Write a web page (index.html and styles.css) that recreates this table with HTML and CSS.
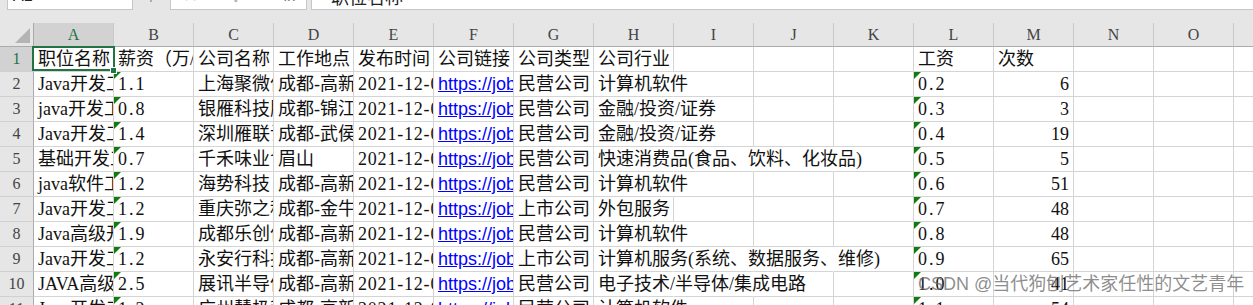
FILE: index.html
```html
<!DOCTYPE html>
<html lang="zh-CN">
<head>
<meta charset="utf-8">
<title>工作表</title>
<link rel="stylesheet" href="styles.css">
</head>
<body>
<div class="app">
  <div class="fbar">
    <div class="namebox">A1</div>
    <div class="sep"><span class="dot"></span></div>
    <div class="fxbox"><span class="ic">✕</span><span class="ic">✓</span><span class="ic fx">fx</span></div>
    <div class="formula">职位名称</div>
  </div>

  <div class="sheet">
    <div class="hrow">
      <div class="corner"><svg width="34" height="23" viewBox="0 0 34 23"><polygon points="30,5 30,20 15,20" fill="#b4b4b4"/></svg></div>
      <div class="ch sel">A</div><div class="ch">B</div><div class="ch">C</div><div class="ch">D</div><div class="ch">E</div><div class="ch">F</div><div class="ch">G</div><div class="ch">H</div><div class="ch">I</div><div class="ch">J</div><div class="ch">K</div><div class="ch">L</div><div class="ch">M</div><div class="ch">N</div><div class="ch">O</div><div class="ch">P</div>
    </div>

    <div class="row">
      <div class="rh sel">1</div>
      <div class="c a1">职位名称<span class="selbox"></span><span class="handle"></span></div>
      <div class="c">薪资（万/月）</div>
      <div class="c">公司名称</div>
      <div class="c">工作地点</div>
      <div class="c">发布时间</div>
      <div class="c">公司链接</div>
      <div class="c">公司类型</div>
      <div class="c">公司行业</div>
      <div class="c"></div><div class="c"></div><div class="c"></div>
      <div class="c">工资</div>
      <div class="c">次数</div>
      <div class="c"></div><div class="c"></div><div class="c"></div>
    </div>

    <div class="row">
      <div class="rh">2</div>
      <div class="c">Java开发工程师</div>
      <div class="c n e">1.1</div>
      <div class="c">上海聚微信息科技</div>
      <div class="c">成都-高新区</div>
      <div class="c d">2021-12-01</div>
      <div class="c"><span class="lnk">https://jobs.51job.com</span></div>
      <div class="c">民营公司</div>
      <div class="c spill nb">计算机软件</div>
      <div class="c"></div><div class="c"></div><div class="c"></div>
      <div class="c n e">0.2</div>
      <div class="c r">6</div>
      <div class="c"></div><div class="c"></div><div class="c"></div>
    </div>

    <div class="row">
      <div class="rh">3</div>
      <div class="c">java开发工程师</div>
      <div class="c n e">0.8</div>
      <div class="c">银雁科技服务</div>
      <div class="c">成都-锦江区</div>
      <div class="c d">2021-12-01</div>
      <div class="c"><span class="lnk">https://jobs.51job.com</span></div>
      <div class="c">民营公司</div>
      <div class="c spill nb">金融/投资/证券</div>
      <div class="c"></div><div class="c"></div><div class="c"></div>
      <div class="c n e">0.3</div>
      <div class="c r">3</div>
      <div class="c"></div><div class="c"></div><div class="c"></div>
    </div>

    <div class="row">
      <div class="rh">4</div>
      <div class="c">Java开发工程师</div>
      <div class="c n e">1.4</div>
      <div class="c">深圳雁联计算</div>
      <div class="c">成都-武侯区</div>
      <div class="c d">2021-12-01</div>
      <div class="c"><span class="lnk">https://jobs.51job.com</span></div>
      <div class="c">民营公司</div>
      <div class="c spill nb">金融/投资/证券</div>
      <div class="c"></div><div class="c"></div><div class="c"></div>
      <div class="c n e">0.4</div>
      <div class="c r">19</div>
      <div class="c"></div><div class="c"></div><div class="c"></div>
    </div>

    <div class="row">
      <div class="rh">5</div>
      <div class="c">基础开发工程师</div>
      <div class="c n e">0.7</div>
      <div class="c">千禾味业食品</div>
      <div class="c">眉山</div>
      <div class="c d">2021-12-01</div>
      <div class="c"><span class="lnk">https://jobs.51job.com</span></div>
      <div class="c">民营公司</div>
      <div class="c spill nb">快速消费品(食品、饮料、化妆品)</div>
      <div class="c nb"></div><div class="c nb"></div><div class="c"></div>
      <div class="c n e">0.5</div>
      <div class="c r">5</div>
      <div class="c"></div><div class="c"></div><div class="c"></div>
    </div>

    <div class="row">
      <div class="rh">6</div>
      <div class="c">java软件工程师</div>
      <div class="c n e">1.2</div>
      <div class="c">海势科技</div>
      <div class="c">成都-高新区</div>
      <div class="c d">2021-12-01</div>
      <div class="c"><span class="lnk">https://jobs.51job.com</span></div>
      <div class="c">民营公司</div>
      <div class="c spill nb">计算机软件</div>
      <div class="c"></div><div class="c"></div><div class="c"></div>
      <div class="c n e">0.6</div>
      <div class="c r">51</div>
      <div class="c"></div><div class="c"></div><div class="c"></div>
    </div>

    <div class="row">
      <div class="rh">7</div>
      <div class="c">Java开发工程师</div>
      <div class="c n e">1.2</div>
      <div class="c">重庆弥之科技</div>
      <div class="c">成都-金牛区</div>
      <div class="c d">2021-12-01</div>
      <div class="c"><span class="lnk">https://jobs.51job.com</span></div>
      <div class="c">上市公司</div>
      <div class="c">外包服务</div>
      <div class="c"></div><div class="c"></div><div class="c"></div>
      <div class="c n e">0.7</div>
      <div class="c r">48</div>
      <div class="c"></div><div class="c"></div><div class="c"></div>
    </div>

    <div class="row">
      <div class="rh">8</div>
      <div class="c">Java高级开发工程师</div>
      <div class="c n e">1.9</div>
      <div class="c">成都乐创信息</div>
      <div class="c">成都-高新区</div>
      <div class="c d">2021-12-01</div>
      <div class="c"><span class="lnk">https://jobs.51job.com</span></div>
      <div class="c">民营公司</div>
      <div class="c spill nb">计算机软件</div>
      <div class="c"></div><div class="c"></div><div class="c"></div>
      <div class="c n e">0.8</div>
      <div class="c r">48</div>
      <div class="c"></div><div class="c"></div><div class="c"></div>
    </div>

    <div class="row">
      <div class="rh">9</div>
      <div class="c">Java开发工程师</div>
      <div class="c n e">1.2</div>
      <div class="c">永安行科技</div>
      <div class="c">成都-高新区</div>
      <div class="c d">2021-12-01</div>
      <div class="c"><span class="lnk">https://jobs.51job.com</span></div>
      <div class="c">上市公司</div>
      <div class="c spill nb">计算机服务(系统、数据服务、维修)</div>
      <div class="c nb"></div><div class="c nb"></div><div class="c"></div>
      <div class="c n e">0.9</div>
      <div class="c r">65</div>
      <div class="c"></div><div class="c"></div><div class="c"></div>
    </div>

    <div class="row">
      <div class="rh">10</div>
      <div class="c">JAVA高级工程师</div>
      <div class="c n e">2.5</div>
      <div class="c">展讯半导体</div>
      <div class="c">成都-高新区</div>
      <div class="c d">2021-12-01</div>
      <div class="c"><span class="lnk">https://jobs.51job.com</span></div>
      <div class="c">民营公司</div>
      <div class="c spill nb">电子技术/半导体/集成电路</div>
      <div class="c nb"></div><div class="c"></div><div class="c"></div>
      <div class="c n e">1.0</div>
      <div class="c r">41</div>
      <div class="c"></div><div class="c"></div><div class="c"></div>
    </div>

    <div class="row">
      <div class="rh">11</div>
      <div class="c">Java开发工程师</div>
      <div class="c n e">1.2</div>
      <div class="c">广州慧极科技</div>
      <div class="c">成都-高新区</div>
      <div class="c d">2021-12-01</div>
      <div class="c"><span class="lnk">https://jobs.51job.com</span></div>
      <div class="c">民营公司</div>
      <div class="c spill nb">计算机软件</div>
      <div class="c"></div><div class="c"></div><div class="c"></div>
      <div class="c n e">1.1</div>
      <div class="c r">54</div>
      <div class="c"></div><div class="c"></div><div class="c"></div>
    </div>
  </div>

  <div class="wm">CSDN @当代狗刨艺术家任性的文艺青年</div>
</div>
</body>
</html>
```

FILE: styles.css
```css
html, body {
  margin: 0;
  padding: 0;
  overflow: hidden;
}

body {
  width: 1253px;
  height: 305px;
  background: #e6e6e6;
  font-family: "Liberation Serif", "Noto Sans CJK SC", serif;
}

.app {
  position: relative;
  width: 1253px;
  height: 305px;
  overflow: hidden;
}

/* formula bar (only its lower edge is visible) */
.fbar {
  height: 10px;
  display: flex;
  align-items: flex-end;
  overflow: hidden;
  padding-left: 7px;
  margin-bottom: 13px;
}

.namebox {
  flex: none;
  width: 126px;
  height: 28px;
  box-sizing: border-box;
  background: #fff;
  border: 1px solid #c6c6c6;
  padding-left: 5px;
  font: 16px/26px "Liberation Sans", sans-serif;
  color: #222;
}

.sep {
  flex: none;
  width: 37px;
  height: 10px;
  display: flex;
  justify-content: center;
}

.dot {
  width: 2px;
  height: 2px;
  margin-left: -2px;
  border-radius: 1px;
  background: #9a9a9a;
}

.fxbox {
  flex: none;
  width: 137px;
  height: 28px;
  box-sizing: border-box;
  background: #fff;
  border: 1px solid #c6c6c6;
  display: flex;
  align-items: center;
  padding-left: 12px;
  gap: 34px;
  font: 18px/26px "Liberation Sans", sans-serif;
  color: #b0b0b0;
}

.fxbox .fx {
  margin-left: 6px;
  color: #777;
  font-style: italic;
  font-size: 15px;
}

.formula {
  flex: 1;
  height: 28px;
  margin-left: 4px;
  box-sizing: border-box;
  background: #fff;
  border: 1px solid #c6c6c6;
  border-right: none;
  padding-left: 19px;
  font: 18px/26px "Noto Sans CJK SC", sans-serif;
  color: #222;
}

/* sheet grid */
.sheet {
  background: #fff;
  width: 1314px;
}

.hrow {
  display: flex;
  height: 24px;
  background: #e6e6e6;
}

.corner {
  flex: none;
  width: 34px;
  height: 24px;
  box-sizing: border-box;
  border-right: 1px solid #ababab;
  border-bottom: 1px solid #ababab;
}

.corner svg {
  display: block;
}

.ch {
  flex: none;
  width: 80px;
  height: 24px;
  box-sizing: border-box;
  border-right: 1px solid #c9c9c9;
  border-bottom: 1px solid #ababab;
  text-align: center;
  font: 16px/24px "Liberation Serif", serif;
  color: #444;
}

.ch.sel {
  background: #d2d2d2;
  color: #217346;
}

.row {
  display: flex;
  height: 25px;
}

.rh {
  flex: none;
  width: 34px;
  height: 25px;
  box-sizing: border-box;
  background: #e6e6e6;
  border-right: 1px solid #ababab;
  border-bottom: 1px solid #d0d0d0;
  text-align: center;
  font: 16px/24px "Liberation Serif", serif;
  color: #444;
}

.rh.sel {
  background: #d2d2d2;
  color: #217346;
}

.c {
  position: relative;
  flex: none;
  width: 80px;
  height: 25px;
  box-sizing: border-box;
  border-right: 1px solid #d4d4d4;
  border-bottom: 1px solid #d4d4d4;
  padding: 0 4px;
  white-space: nowrap;
  overflow: hidden;
  font-size: 18px;
  line-height: 24px;
  color: #111;
}

.c.r {
  text-align: right;
}

.c.n {
  letter-spacing: 2px;
}

.c.d {
  letter-spacing: 0.8px;
}

.c.spill {
  overflow: visible;
}

.c.nb {
  border-right-color: transparent;
}

.c.e::before {
  content: "";
  position: absolute;
  left: 0;
  top: 0;
  width: 0;
  height: 0;
  border-top: 7px solid #107c10;
  border-right: 7px solid transparent;
}

.lnk {
  font-family: "Liberation Sans", sans-serif;
  color: #0000ff;
  text-decoration: underline;
}

/* active cell A1 */
.c.a1 {
  overflow: visible;
}

.selbox {
  position: absolute;
  left: -2px;
  right: -2px;
  top: -1px;
  bottom: 0;
  border: 2px solid #217346;
  z-index: 2;
  pointer-events: none;
}

.handle {
  position: absolute;
  left: 76px;
  top: 20px;
  width: 5px;
  height: 5px;
  background: #217346;
  border: 1px solid #fff;
  z-index: 3;
}

/* watermark */
.wm {
  position: absolute;
  left: 918px;
  top: 274px;
  font: 18px/20px "Liberation Sans", "Noto Sans CJK SC", sans-serif;
  color: rgba(110, 110, 110, 0.78);
  white-space: nowrap;
  z-index: 5;
}
```
